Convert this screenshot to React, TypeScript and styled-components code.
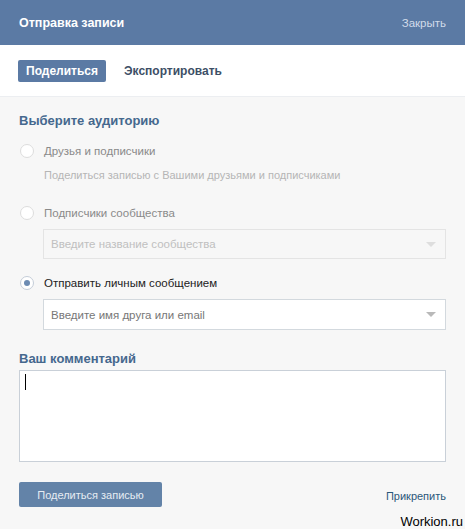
import React from "react";
import styled, { createGlobalStyle } from "styled-components";

const GlobalStyle = createGlobalStyle`
  html, body {
    margin: 0;
    padding: 0;
    background: #f7f7f7;
  }
  body {
    font-family: "Liberation Sans", Arial, sans-serif;
    font-size: 11px;
    color: #000;
  }
`;

const Box = styled.div`
  width: 465px;
  height: 529px;
  background: #f7f7f7;
  position: relative;
  overflow: hidden;
`;

const Header = styled.div`
  height: 45px;
  background: #5b7aa4;
  display: flex;
  align-items: center;
  justify-content: space-between;
  padding: 0 19px;
`;

const Title = styled.div`
  color: #fff;
  font-weight: bold;
  font-size: 12.5px;
`;

const CloseLink = styled.a`
  color: #d2dcea;
  font-size: 11.5px;
  cursor: pointer;
`;

const Tabs = styled.div`
  height: 52px;
  background: #fff;
  display: flex;
  align-items: center;
  gap: 18px;
  padding: 0 18px;
  border-bottom: 1px solid #eceef1;
  box-sizing: border-box;
`;

const Tab = styled.div<{ $active?: boolean }>`
  height: 22px;
  display: flex;
  align-items: center;
  padding: 0 8px;
  border-radius: 2px;
  font-weight: bold;
  font-size: 12px;
  background: ${(p) => (p.$active ? "#5b7aa4" : "transparent")};
  color: ${(p) => (p.$active ? "#fff" : "#3d4f66")};
  margin-left: ${(p) => (p.$active ? "0" : "-8px")};
`;

const Body = styled.div`
  padding: 16px 19px 0 19px;
  display: flex;
  flex-direction: column;
`;

const SectionTitle = styled.div<{ $mt?: number }>`
  color: #45688e;
  font-weight: bold;
  font-size: 13px;
  line-height: 16px;
  margin-top: ${(p) => p.$mt || 0}px;
`;

const RadioRow = styled.div<{ $mt: number }>`
  display: flex;
  align-items: center;
  gap: 10px;
  margin-top: ${(p) => p.$mt}px;
  height: 16px;
  padding-left: 1px;
`;

const Radio = styled.span<{ $checked?: boolean }>`
  width: 12px;
  height: 12px;
  border-radius: 50%;
  border: 1px solid ${(p) => (p.$checked ? "#c5cdd8" : "#dddddd")};
  background: #fff;
  box-sizing: content-box;
  display: flex;
  align-items: center;
  justify-content: center;
  &::after {
    content: "";
    display: ${(p) => (p.$checked ? "block" : "none")};
    width: 6px;
    height: 6px;
    border-radius: 50%;
    background: #6d8cb3;
  }
`;

const Label = styled.span<{ $disabled?: boolean }>`
  color: ${(p) => (p.$disabled ? "#8a8a8a" : "#222")};
  font-size: 11.5px;
`;

const Hint = styled.div`
  color: #b5b5b5;
  font-size: 11px;
  line-height: 16px;
  margin: 8px 0 0 25px;
`;

const Select = styled.div<{ $disabled?: boolean; $mt: number }>`
  margin: ${(p) => p.$mt}px 0 0 24px;
  height: ${(p) => (p.$disabled ? 30 : 31)}px;
  box-sizing: border-box;
  border: 1px solid ${(p) => (p.$disabled ? "#e4e4e4" : "#d3d9de")};
  background: ${(p) => (p.$disabled ? "#f7f7f7" : "#fff")};
  display: flex;
  align-items: center;
  justify-content: space-between;
  padding: 0 9px 0 7px;
  color: ${(p) => (p.$disabled ? "#c0c0c0" : "#777")};
  font-size: 11.5px;
`;

const Arrow = styled.span<{ $disabled?: boolean }>`
  width: 0;
  height: 0;
  border-left: 5px solid transparent;
  border-right: 5px solid transparent;
  border-top: 5px solid ${(p) => (p.$disabled ? "#dedede" : "#b9b9b9")};
`;

const Comment = styled.div`
  margin-top: 3px;
  height: 92px;
  box-sizing: border-box;
  border: 1px solid #c9d0d8;
  background: #fff;
  padding: 3px 5px;
`;

const Caret = styled.span`
  display: block;
  width: 1px;
  height: 16px;
  background: #000;
`;

const Footer = styled.div`
  margin-top: 20px;
  display: flex;
  align-items: center;
  justify-content: space-between;
`;

const SubmitButton = styled.button`
  width: 143px;
  height: 25px;
  border: none;
  border-radius: 2px;
  background: #6383a8;
  color: #e6ecf3;
  font-family: "Liberation Sans", Arial, sans-serif;
  font-size: 11px;
  padding: 0;
  cursor: pointer;
`;

const AttachLink = styled.a`
  color: #2b587a;
  font-size: 11px;
  margin-top: 3px;
  cursor: pointer;
`;

const Watermark = styled.div`
  position: absolute;
  right: 2px;
  bottom: 0;
  font-family: "Liberation Sans", Arial, sans-serif;
  font-size: 13px;
  color: #000;
  line-height: 15px;
`;

export default function App() {
  return (
    <Box>
      <GlobalStyle />
      <Header>
        <Title>Отправка записи</Title>
        <CloseLink>Закрыть</CloseLink>
      </Header>
      <Tabs>
        <Tab $active>Поделиться</Tab>
        <Tab>Экспортировать</Tab>
      </Tabs>
      <Body>
        <SectionTitle>Выберите аудиторию</SectionTitle>
        <RadioRow $mt={14}>
          <Radio />
          <Label $disabled>Друзья и подписчики</Label>
        </RadioRow>
        <Hint>Поделиться записью с Вашими друзьями и подписчиками</Hint>
        <RadioRow $mt={22}>
          <Radio />
          <Label $disabled>Подписчики сообщества</Label>
        </RadioRow>
        <Select $disabled $mt={8}>
          <span>Введите название сообщества</span>
          <Arrow $disabled />
        </Select>
        <RadioRow $mt={16}>
          <Radio $checked />
          <Label>Отправить личным сообщением</Label>
        </RadioRow>
        <Select $mt={8}>
          <span>Введите имя друга или email</span>
          <Arrow />
        </Select>
        <SectionTitle $mt={21}>Ваш комментарий</SectionTitle>
        <Comment>
          <Caret />
        </Comment>
        <Footer>
          <SubmitButton>Поделиться записью</SubmitButton>
          <AttachLink>Прикрепить</AttachLink>
        </Footer>
      </Body>
      <Watermark>Workion.ru</Watermark>
    </Box>
  );
}
